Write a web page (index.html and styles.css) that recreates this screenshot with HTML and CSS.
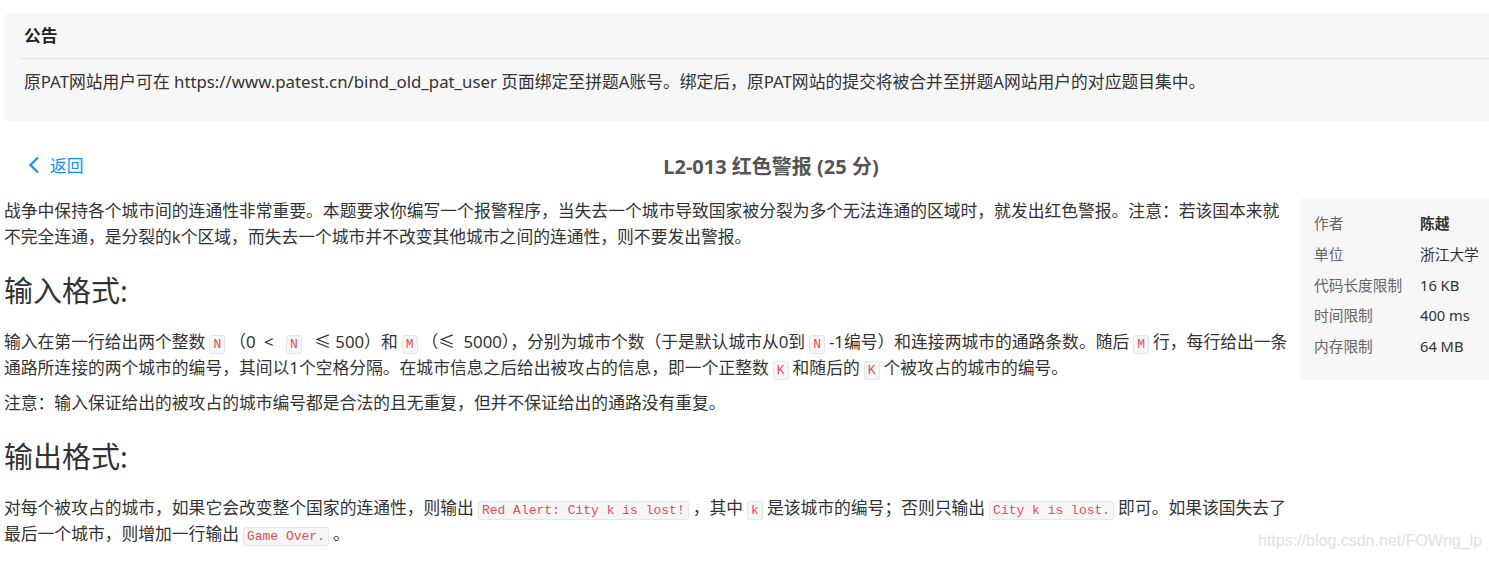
FILE: index.html
```html
<!DOCTYPE html>
<html lang="zh-CN">
<head>
  <meta charset="UTF-8">
  <meta name="viewport" content="width=device-width, initial-scale=1.0">
  <title>L2-013 红色警报</title>
  <link rel="stylesheet" href="styles.css">
</head>
<body>
  <div class="notice">
    <div class="notice-title">公告</div>
    <div class="notice-body">原PAT网站用户可在 https://www.patest.cn/bind_old_pat_user 页面绑定至拼题A账号。绑定后，原PAT网站的提交将被合并至拼题A网站用户的对应题目集中。</div>
  </div>

  <div class="header">
    <a class="back" href="#">
      <svg width="12" height="18" viewBox="0 0 12 18"><path d="M10 1.5 L2.5 9 L10 16.5" fill="none" stroke="#1a8cff" stroke-width="2.2"/></svg>
      返回
    </a>
    <div class="title">L2-013 红色警报 (25 分)</div>
  </div>

  <div class="problem">
    <div class="content">
      <p>战争中保持各个城市间的连通性非常重要。本题要求你编写一个报警程序，当失去一个城市导致国家被分裂为多个无法连通的区域时，就发出红色警报。注意：若该国本来就不完全连通，是分裂的k个区域，而失去一个城市并不改变其他城市之间的连通性，则不要发出警报。</p>

      <h2>输入格式:</h2>
      <p>输入在第一行给出两个整数<code>N</code>（0&ensp;&lt;&ensp;<code>N</code>&ensp;≤ 500）和<code>M</code>（≤&ensp;5000），分别为城市个数（于是默认城市从0到<code>N</code>-1编号）和连接两城市的通路条数。随后<code>M</code>行，每行给出一条通路所连接的两个城市的编号，其间以1个空格分隔。在城市信息之后给出被攻占的信息，即一个正整数<code>K</code>和随后的<code>K</code>个被攻占的城市的编号。</p>
      <p>注意：输入保证给出的被攻占的城市编号都是合法的且无重复，但并不保证给出的通路没有重复。</p>

      <h2>输出格式:</h2>
      <p>对每个被攻占的城市，如果它会改变整个国家的连通性，则输出<code>Red Alert: City k is lost!</code>，其中<code>k</code>是该城市的编号；否则只输出<code>City k is lost.</code>即可。如果该国失去了最后一个城市，则增加一行输出<code>Game Over.</code>。</p>
    </div>

    <div class="info">
      <div class="row"><span class="label">作者</span><span class="value strong">陈越</span></div>
      <div class="row"><span class="label">单位</span><span class="value">浙江大学</span></div>
      <div class="row"><span class="label">代码长度限制</span><span class="value">16 KB</span></div>
      <div class="row"><span class="label">时间限制</span><span class="value">400 ms</span></div>
      <div class="row"><span class="label">内存限制</span><span class="value">64 MB</span></div>
    </div>
  </div>

  <div class="watermark">https://blog.csdn.net/FOWng_lp</div>
</body>
</html>
```

FILE: styles.css
```css
body {
  margin: 0;
  padding: 13px 0 0 4px;
  font-family: "Segoe UI", "Noto Sans", "Noto Sans CJK SC", sans-serif;
  font-size: 16.8px;
  color: #333;
  overflow: hidden;
}
.notice {
  background-color: #f7f7f7;
  border-radius: 6px 0 0 6px;
  padding: 0 0 0 16px;
  height: 108px;
}
.notice-title {
  font-weight: bold;
  color: #222;
  height: 45px;
  line-height: 46px;
  padding-left: 4px;
  border-bottom: 1px solid #e3e3e3;
}
.notice-body {
  padding: 9px 0 0 4px;
  line-height: 27px;
}
.header {
  display: flex;
  align-items: center;
  height: 44px;
  margin-top: 22px;
  padding-right: 47px;
}
.back {
  display: flex;
  align-items: center;
  gap: 10px;
  width: 72px;
  padding-left: 24px;
  color: #1a8cff;
  text-decoration: none;
}
.title {
  flex: 1;
  text-align: center;
  font-size: 20px;
  font-weight: bold;
  color: #555;
}
.problem {
  display: flex;
  gap: 6px;
  margin-top: 11px;
}
.content {
  width: 1290px;
  line-height: 26px;
}
.content p {
  margin: 0 0 9px;
}
.content h2 {
  font-size: 29px;
  font-weight: normal;
  line-height: 40px;
  margin: 21px 0 18px;
  color: #333;
}
code {
  font-family: "Liberation Mono", monospace;
  font-size: 13px;
  line-height: 16px;
  color: #ea4a5a;
  background-color: #f6f6f6;
  border: 1px solid #e6e6e6;
  border-radius: 3px;
  padding: 1px 3px;
  margin: 0 4px;
}
.info {
  flex: none;
  width: 175px;
  margin-top: 0;
  align-self: flex-start;
  background-color: #f7f7f7;
  border-radius: 4px 0 0 4px;
  padding: 10px 0 18px 14px;
  font-size: 14.7px;
}
.row {
  display: flex;
  line-height: 30.75px;
}
.label {
  width: 106px;
  color: #666;
}
.value {
  color: #333;
}
.strong {
  font-weight: bold;
}
.watermark {
  position: absolute;
  left: 1258px;
  top: 532px;
  font-family: "Liberation Sans", Arial, sans-serif;
  font-size: 16px;
  color: #e2e2e2;
}
```
